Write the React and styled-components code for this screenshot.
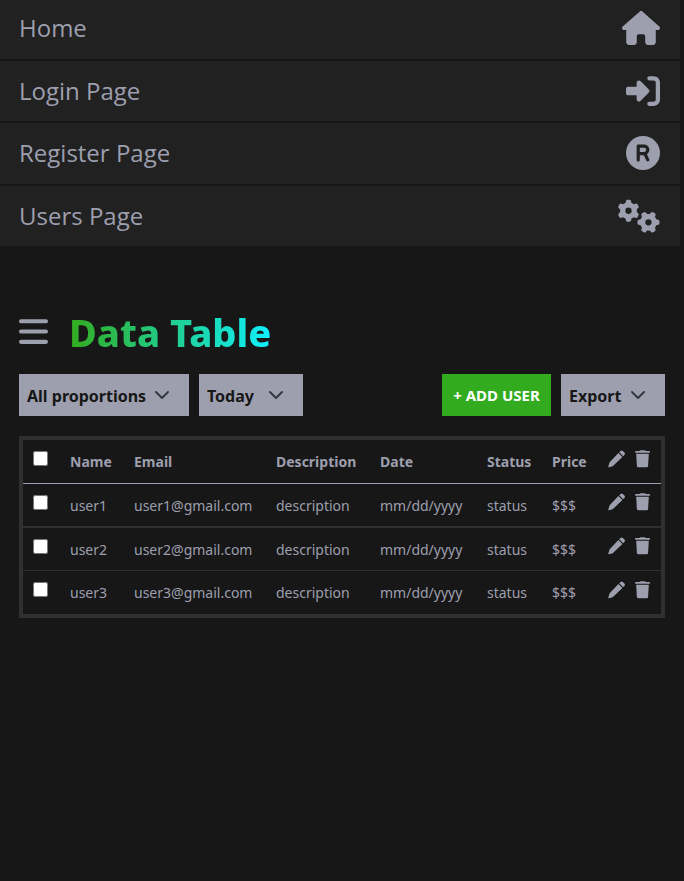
import React from "react";
import styled, { createGlobalStyle } from "styled-components";
import {
  FaHouse,
  FaRightToBracket,
  FaRegistered,
  FaGears,
  FaBars,
} from "react-icons/fa6";

const ink = "#9d9fae";
const page = "#171717";
const edge = "#303030";

const GlobalStyle = createGlobalStyle`
  *, *::before, *::after { box-sizing: border-box; }
  body {
    margin: 0;
    background: ${page};
    color: ${ink};
    font-family: "Segoe UI", "Noto Sans", "Open Sans", sans-serif;
    font-size: 14px;
  }
`;

const Nav = styled.nav`
  display: grid;
  grid-auto-rows: 1fr;
  gap: 2px;
  min-height: 248px;
  margin: -2px 4px 0 0;
`;

const NavLink = styled.a`
  display: flex;
  align-items: center;
  justify-content: space-between;
  padding: 0 20px 0 19px;
  background: #212121;
  color: ${ink};
  font-family: "Segoe UI", "Open Sans", "Noto Sans", sans-serif;
  font-size: 24px;
  line-height: 32px;
  text-decoration: none;

  svg {
    flex: none;
    height: 34px;
    width: ${(p) => p.$iconWidth}px;
  }
`;

const Main = styled.main`
  padding: 64px 19px 20px;
`;

const Header = styled.header`
  display: flex;
  align-items: center;
  gap: 21px;
  height: 44px;
`;

const MenuButton = styled.button`
  display: flex;
  margin: 0 0 2px;
  padding: 0;
  border: 0;
  background: none;
  color: ${ink};
  cursor: pointer;

  svg {
    width: 29px;
    height: 33px;
  }
`;

const Title = styled.h1`
  margin: 0;
  font-size: 38px;
  line-height: 44px;
  font-weight: 800;
  background: linear-gradient(90deg, #33ab1f, #0ff0fc);
  background-clip: text;
  -webkit-background-clip: text;
  color: transparent;
`;

const Toolbar = styled.div`
  display: flex;
  gap: 10px;
  margin: 20px 0;
`;

const SelectBox = styled.div`
  display: grid;
  align-items: center;
  width: ${(p) => p.$width}px;
  height: 42px;
  background: ${ink};

  > * {
    grid-area: 1 / 1;
  }

  svg {
    justify-self: end;
    width: 16px;
    height: 12px;
    margin-right: 19px;
    pointer-events: none;
  }
`;

const Select = styled.select`
  appearance: none;
  width: 100%;
  height: 100%;
  padding: 2px 36px 0 8px;
  border: 0;
  border-radius: 0;
  background: transparent;
  color: ${page};
  font: inherit;
  font-size: 16px;
  font-weight: 700;
`;

const AddButton = styled.button`
  height: 42px;
  margin-left: auto;
  padding: 0;
  width: 109px;
  border: 0;
  background: #33ab1f;
  color: #fff;
  font: inherit;
  font-size: 15px;
  font-weight: 700;
  cursor: pointer;
`;

const Frame = styled.div`
  border: 4px solid ${edge};
`;

const Table = styled.table`
  width: 100%;
  table-layout: fixed;
  border-collapse: separate;
  border-spacing: 0;
  text-align: left;
`;

const Col = styled.col`
  width: ${(p) => p.$width}px;
`;

const Row = styled.tr`
  > * {
    height: ${(p) => p.$height}px;
    padding: 0 0 0 10px;
    border-bottom: ${(p) => p.$line}px solid ${(p) => p.$color || edge};
    white-space: nowrap;
  }
`;

const Check = styled.input`
  display: block;
  width: 15px;
  height: 15px;
  margin: 0 0 6px;
`;

const Actions = styled.div`
  display: flex;
  gap: 10px;
  padding-bottom: 6px;
`;

const IconButton = styled.button`
  display: flex;
  padding: 0;
  border: 0;
  background: none;
  color: ${ink};
  cursor: pointer;

  svg {
    height: 18px;
    width: auto;
  }
`;

const links = [
  ["Home", FaHouse, 38],
  ["Login Page", FaRightToBracket, 34],
  ["Register Page", FaRegistered, 34],
  ["Users Page", FaGears, 42],
];

const columns = [37, 64, 142, 104, 107, 65, 56, 63];
const headings = ["Name", "Email", "Description", "Date", "Status", "Price"];
const users = [
  { name: "user1", line: 2, height: 44 },
  { name: "user2", line: 1, height: 43 },
  { name: "user3", line: 0, height: 43 },
];

function Dropdown({ label, text, width }) {
  return (
    <SelectBox $width={width}>
      <Select aria-label={label} defaultValue={text}>
        <option>{text}</option>
      </Select>
      <svg viewBox="0 0 16 12" fill="none" aria-hidden="true">
        <path
          d="M2 3l6 6 6-6"
          stroke="#343a40"
          strokeWidth="2"
          strokeLinecap="round"
          strokeLinejoin="round"
        />
      </svg>
    </SelectBox>
  );
}

function PenIcon() {
  return (
    <svg viewBox="0 0 17 18" width="17" height="18" fill="currentColor" aria-hidden="true">
      <path d="M10.4 3.1l4 4-9.2 8.7q-.5.4-1.1.6L.9 17.2q-.8.2-.6-.7L1.4 13q.2-.7.7-1.2z" />
      <path d="M11.2 2.3l1.3-1.3q1.2-1.1 2.4 0L16.4 2.5q1.1 1.2 0 2.4l-1.2 1.3z" />
    </svg>
  );
}

function TrashIcon() {
  return (
    <svg viewBox="0 0 15 18" width="15" height="18" fill="currentColor" aria-hidden="true">
      <path d="M4.4 1l.5-.6q.2-.2.5-.2h4.2q.3 0 .5.2l.5.6H14q1 0 1 .9t-1 .9H1Q0 2.8 0 1.9T1 1z" />
      <path d="M1.2 3.8h12.6l-.7 12.1q-.1 1.4-1.5 1.4H3.4q-1.4 0-1.5-1.4z" />
    </svg>
  );
}

function RowActions({ target }) {
  return (
    <Actions>
      <IconButton type="button" aria-label={`Edit ${target}`}>
        <PenIcon />
      </IconButton>
      <IconButton type="button" aria-label={`Delete ${target}`}>
        <TrashIcon />
      </IconButton>
    </Actions>
  );
}

export default function App() {
  return (
    <>
      <GlobalStyle />
      <Nav>
        {links.map(([text, Icon, iconWidth]) => (
          <NavLink href="#" key={text} $iconWidth={iconWidth}>
            {text}
            <Icon />
          </NavLink>
        ))}
      </Nav>
      <Main>
        <Header>
          <MenuButton type="button" aria-label="Menu">
            <FaBars preserveAspectRatio="none" />
          </MenuButton>
          <Title>Data Table</Title>
        </Header>
        <Toolbar>
          <Dropdown label="Proportions" text="All proportions" width={170} />
          <Dropdown label="Period" text="Today" width={104} />
          <AddButton type="button">+ ADD USER</AddButton>
          <Dropdown label="Export" text="Export" width={104} />
        </Toolbar>
        <Frame>
          <Table>
            <colgroup>
              {columns.map((width, i) => (
                <Col key={i} $width={width} />
              ))}
            </colgroup>
            <thead>
              <Row $height={44} $line={1} $color={ink}>
                <th>
                  <Check type="checkbox" aria-label="Select all" />
                </th>
                {headings.map((text) => (
                  <th key={text}>{text}</th>
                ))}
                <th>
                  <RowActions target="all" />
                </th>
              </Row>
            </thead>
            <tbody>
              {users.map(({ name, line, height }) => (
                <Row key={name} $height={height} $line={line}>
                  <td>
                    <Check type="checkbox" aria-label={`Select ${name}`} />
                  </td>
                  <td>{name}</td>
                  <td>{name}@gmail.com</td>
                  <td>description</td>
                  <td>mm/dd/yyyy</td>
                  <td>status</td>
                  <td>$$$</td>
                  <td>
                    <RowActions target={name} />
                  </td>
                </Row>
              ))}
            </tbody>
          </Table>
        </Frame>
      </Main>
    </>
  );
}
